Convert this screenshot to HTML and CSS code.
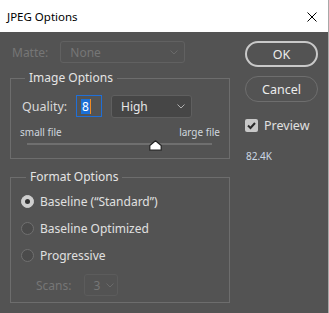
FILE: index.html
```html
<!DOCTYPE html>
<html lang="en">
<head>
    <meta charset="UTF-8">
    <title>JPEG Options</title>
    <link rel="stylesheet" href="styles.css">
</head>
<body>

<div class="dialog">
    <div class="titlebar">
        <span class="title">JPEG Options</span>
        <svg class="close" width="10" height="10" viewBox="0 0 10 10">
            <path d="M0.5 0.5 L9.5 9.5 M9.5 0.5 L0.5 9.5" stroke="#000" stroke-width="1" fill="none"/>
        </svg>
    </div>

    <div class="content">
        <div class="main">
            <div class="matte-row">
                <span class="label disabled">Matte:</span>
                <div class="select select-matte disabled">
                    <span>None</span>
                    <svg class="chevron" width="8" height="5" viewBox="0 0 8 5"><path d="M0.5 0.5 L4 4 L7.5 0.5" stroke="currentColor" fill="none"/></svg>
                </div>
            </div>

            <fieldset class="group group-image">
                <legend>Image Options</legend>
                <div class="quality-row">
                    <span class="label quality-label">Quality:</span>
                    <div class="quality-input"><span class="sel">8</span><span class="caret"></span></div>
                    <div class="select select-high">
                        <span>High</span>
                        <svg class="chevron" width="8" height="5" viewBox="0 0 8 5"><path d="M0.5 0.5 L4 4 L7.5 0.5" stroke="currentColor" fill="none"/></svg>
                    </div>
                </div>
                <div class="slider-labels">
                    <span>small file</span>
                    <span>large file</span>
                </div>
                <div class="slider">
                    <div class="track"></div>
                    <svg class="thumb" width="13" height="11" viewBox="0 0 13 11" style="left: 69%">
                        <path d="M6.5 0.8 L12.2 5.5 L12.2 10.2 L0.8 10.2 L0.8 5.5 Z" fill="#fff" stroke="#222" stroke-width="1.2" stroke-linejoin="round"/>
                    </svg>
                </div>
            </fieldset>

            <fieldset class="group group-format">
                <legend>Format Options</legend>
                <div class="radio-row">
                    <span class="radio checked"></span>
                    <span>Baseline (&ldquo;Standard&rdquo;)</span>
                </div>
                <div class="radio-row">
                    <span class="radio"></span>
                    <span>Baseline Optimized</span>
                </div>
                <div class="radio-row">
                    <span class="radio"></span>
                    <span>Progressive</span>
                </div>
                <div class="scans-row">
                    <span class="label disabled">Scans:</span>
                    <div class="select select-scans disabled">
                        <span>3</span>
                        <svg class="chevron" width="8" height="5" viewBox="0 0 8 5"><path d="M0.5 0.5 L4 4 L7.5 0.5" stroke="currentColor" fill="none"/></svg>
                    </div>
                </div>
            </fieldset>
        </div>

        <div class="side">
            <button class="btn btn-ok">OK</button>
            <button class="btn btn-cancel">Cancel</button>
            <div class="check-row">
                <span class="checkbox">
                    <svg width="13" height="13" viewBox="0 0 13 13"><path d="M3 6.5 L5.5 9 L10 4" stroke="#2a2a2a" stroke-width="2" fill="none"/></svg>
                </span>
                <span>Preview</span>
            </div>
            <div class="size">82.4K</div>
        </div>
    </div>
</div>

</body>
</html>
```

FILE: styles.css
```css
body {
    margin: 0;
    padding: 0;
    background-color: #535353;
    font-family: 'Noto Sans', 'Open Sans', sans-serif;
    font-size: 12px;
    color: #dcdcdc;
}
.dialog {
    width: 328px;
    height: 313px;
    border-right: 1px solid #a8a8a8;
}
.titlebar {
    height: 32px;
    background: #fff;
    display: flex;
    align-items: center;
    justify-content: space-between;
    padding: 0 11px 0 7px;
}
.title {
    color: #000;
    font-size: 11.5px;
}
.close {
    margin-top: 1px;
}
.content {
    display: flex;
}
.main {
    width: 220px;
    margin-left: 10px;
}
.label {
    color: #d8d8d8;
}
.disabled {
    color: #767676;
}
.matte-row {
    display: flex;
    align-items: center;
    margin-top: 9px;
    padding-left: 2px;
    height: 22px;
}
.select {
    display: flex;
    align-items: center;
    justify-content: space-between;
    box-sizing: border-box;
    border: 1px solid #616161;
    border-radius: 3px;
    padding: 0 6px 0 9px;
}
.select-matte {
    width: 125px;
    height: 22px;
    margin-left: 12px;
}
.select-high {
    width: 81px;
    height: 23px;
    background: #464646;
    border-color: #5f5f5f;
    color: #e6e6e6;
    margin-left: 9px;
}
.chevron {
    color: #b0b0b0;
}
.disabled .chevron {
    color: #6a6a6a;
}
.group {
    margin: 0;
    padding: 0;
    border: 1px solid #6d6d6d;
}
.group legend {
    padding: 0 4px;
    line-height: 16px;
    font-size: 12px;
    color: #e4e4e4;
}
.group-image {
    margin-top: 7px;
    padding: 0 9px 7px 9px;
}
.group-image legend {
    margin-left: 5px;
}
.quality-row {
    display: flex;
    align-items: center;
    margin-top: 9px;
    padding-left: 2px;
    height: 22px;
}
.quality-label {
    width: 54px;
    font-size: 12.5px;
}
.quality-input {
    box-sizing: border-box;
    width: 26px;
    height: 22px;
    border: 1px solid #1f6fd8;
    display: flex;
    align-items: center;
    padding-left: 4px;
}
.quality-input .sel {
    background: #1a6fd6;
    color: #fff;
    line-height: 15px;
    padding: 0 1px;
}
.quality-input .caret {
    width: 1px;
    height: 15px;
    background: #f08a24;
}
.slider-labels {
    display: flex;
    justify-content: space-between;
    margin-top: 9px;
    font-size: 10px;
    line-height: 13px;
    color: #cfd6de;
}
.slider {
    position: relative;
    height: 12px;
    margin: 0 8px 0 7px;
}
.track {
    position: relative;
    top: 4px;
    height: 2px;
    background: #6f6f6f;
}
.thumb {
    position: absolute;
    top: 1px;
    margin-left: -6px;
}
.group-format {
    margin-top: 10px;
    padding: 3px 10px 6px 10px;
}
.group-format legend {
    margin-left: 5px;
}
.radio-row {
    display: flex;
    align-items: center;
    height: 27px;
    color: #e0e0e0;
}
.radio {
    box-sizing: border-box;
    width: 13px;
    height: 13px;
    border-radius: 50%;
    border: 1px solid #707070;
    background: #4b4b4b;
    margin-right: 6px;
}
.radio.checked {
    background: #cfcfcf;
    border-color: #cfcfcf;
    display: flex;
    align-items: center;
    justify-content: center;
}
.radio.checked::after {
    content: '';
    width: 5px;
    height: 5px;
    border-radius: 50%;
    background: #333;
}
.scans-row {
    display: flex;
    align-items: center;
    margin-top: 5px;
    padding-left: 15px;
}
.select-scans {
    width: 34px;
    height: 22px;
    margin-left: 13px;
    padding: 0 3px 0 8px;
    border-color: #5c5c5c;
}
.side {
    width: 73px;
    margin-left: 15px;
    display: flex;
    flex-direction: column;
}
.btn {
    box-sizing: border-box;
    height: 26px;
    border-radius: 13px;
    background: transparent;
    font-family: inherit;
    font-size: 12.5px;
    color: #ececec;
    padding: 0;
}
.btn-ok {
    margin-top: 9px;
    border: 2px solid #c9c9c9;
}
.btn-cancel {
    margin-top: 9px;
    border: 1px solid #6e6e6e;
}
.check-row {
    display: flex;
    align-items: center;
    margin-top: 17px;
    height: 13px;
    font-size: 12.5px;
    color: #e0e0e0;
}
.checkbox {
    width: 13px;
    height: 13px;
    border-radius: 2px;
    background: #c8c8c8;
    margin-right: 6px;
    display: flex;
}
.size {
    margin-top: 18px;
    margin-left: 1px;
    font-size: 10px;
    line-height: 13px;
    color: #cdd8e4;
}
```
